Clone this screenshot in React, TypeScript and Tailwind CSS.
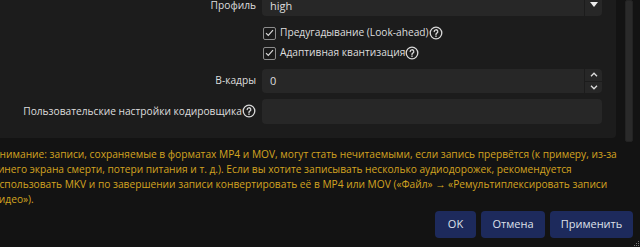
import React from 'react';

const HelpIcon = () => (
  <svg width="14" height="14" viewBox="0 0 14 14" className="shrink-0">
    <circle cx="7" cy="7" r="5.8" fill="none" stroke="#d8d8d8" strokeWidth="1.3" />
    <path d="M5.2 5.6a1.8 1.8 0 1 1 2.6 1.6c-.6.3-.8.6-.8 1.2v.3" fill="none" stroke="#d8d8d8" strokeWidth="1.3" strokeLinecap="round" />
    <circle cx="7" cy="10.2" r="0.8" fill="#d8d8d8" />
  </svg>
);

const Checkbox = ({ label }: { label: string }) => (
  <div className="flex items-center h-[20px]">
    <div className="w-[13px] h-[13px] ml-[1px] rounded-[2px] border border-[#8c8c8c] bg-[#1a1a1a] flex items-center justify-center">
      <svg width="9" height="8" viewBox="0 0 9 8">
        <path d="M1 4.2l2.3 2.3L8 1.2" fill="none" stroke="#d6d6d6" strokeWidth="1.2" />
      </svg>
    </div>
    <span className="ml-[4px] whitespace-nowrap">{label}</span>
    <HelpIcon />
  </div>
);

const Row = ({ label, help, children, className }: { label: string; help?: boolean; children: React.ReactNode; className?: string }) => (
  <div className={`flex items-center ${className ?? ''}`}>
    <div className="w-[256px] flex items-center justify-end">
      <span className="whitespace-nowrap">{label}</span>
      {help && <HelpIcon />}
    </div>
    <div className="ml-[6px] w-[340px]">{children}</div>
  </div>
);

const warning = [
  'Внимание: записи, сохраняемые в форматах MP4 и MOV, могут стать нечитаемыми, если запись прервётся (к примеру, из-за',
  'синего экрана смерти, потери питания и т. д.). Если вы хотите записывать несколько аудиодорожек, рекомендуется',
  'использовать MKV и по завершении записи конвертировать её в MP4 или MOV («Файл» → «Ремультиплексировать записи',
  'видео»).',
];

export default function App() {
  return (
    <div
      className="w-[640px] h-[247px] bg-[#131313] overflow-hidden text-[10.2px] text-[#dedede] flex flex-col"
      style={{ fontFamily: '"Open Sans", "Noto Sans", sans-serif' }}
    >
      {/* Scroll area */}
      <div className="flex h-[142px] shrink-0">
        <div className="w-[616px] h-[138px] bg-[#1c1c1c] rounded-br-[4px] flex flex-col">
          <Row label="Профиль" className="mt-[-9px] h-[25px] pt-[5px]">
            <div className="h-[25px] mt-[-5px] bg-[#272727] rounded-[4px] flex items-center relative">
              <span className="ml-[8px] pt-[5px] text-[11px]">high</span>
              <div className="absolute right-0 top-0 h-full w-[18px] border-l border-[#1c1c1c] flex items-end justify-center pb-[9px]">
                <svg width="8" height="5" viewBox="0 0 8 5"><path d="M0 0h8L4 5z" fill="#eeeeee" /></svg>
              </div>
            </div>
          </Row>
          <div className="ml-[262px] mt-[7px] flex flex-col">
            <Checkbox label="Предугадывание (Look-ahead)" />
            <Checkbox label="Адаптивная квантизация" />
          </div>
          <Row label="В-кадры" className="mt-[6px] h-[24px]">
            <div className="h-[24px] bg-[#272727] rounded-[4px] flex items-center relative">
              <span className="ml-[8px] text-[11px]">0</span>
              <div className="absolute right-0 top-0 h-full w-[18px] border-l border-[#1c1c1c] flex flex-col">
                <div className="flex-1 flex items-center justify-center border-b border-[#1c1c1c]">
                  <svg width="8" height="5" viewBox="0 0 8 5"><path d="M1 4.2L4 1.2l3 3" fill="none" stroke="#dddddd" strokeWidth="1.3" /></svg>
                </div>
                <div className="flex-1 flex items-center justify-center">
                  <svg width="8" height="5" viewBox="0 0 8 5"><path d="M1 .8l3 3 3-3" fill="none" stroke="#dddddd" strokeWidth="1.3" /></svg>
                </div>
              </div>
            </div>
          </Row>
          <Row label="Пользовательские настройки кодировщика" help className="mt-[6px] h-[25px]">
            <div className="h-[25px] bg-[#272727] rounded-[4px]" />
          </Row>
        </div>
        <div className="w-[9px]" />
        <div className="w-[8px] h-[142px] bg-[#2a2a2a] border border-[#232323] rounded-[2px]" />
      </div>

      {/* Warning */}
      <div className="mt-[5px] ml-[-7px] text-[#d4a420] leading-[15px] text-[10.2px]">
        {warning.map((line) => (
          <div key={line} className="whitespace-nowrap">{line}</div>
        ))}
      </div>

      {/* Buttons */}
      <div className="flex-1 flex items-end justify-end pr-[7px] pb-[9px] gap-[5px] relative">
        <button className="h-[27px] w-[41px] bg-[#1d2a5c] rounded-[4px] text-[#dde1ea] text-[11px]">OK</button>
        <button className="h-[27px] w-[64px] bg-[#1d2a5c] rounded-[4px] text-[#dde1ea] text-[11px]">Отмена</button>
        <button className="h-[27px] w-[83px] bg-[#1d2a5c] rounded-[4px] text-[#dde1ea] text-[11px]">Применить</button>
        <svg width="6" height="6" viewBox="0 0 6 6" className="absolute right-0 bottom-0">
          <rect x="4" y="0" width="1" height="1" fill="#777" />
          <rect x="2" y="2" width="1" height="1" fill="#777" />
          <rect x="4" y="2" width="1" height="1" fill="#777" />
          <rect x="0" y="4" width="1" height="1" fill="#777" />
          <rect x="2" y="4" width="1" height="1" fill="#777" />
          <rect x="4" y="4" width="1" height="1" fill="#777" />
        </svg>
      </div>
    </div>
  );
}
